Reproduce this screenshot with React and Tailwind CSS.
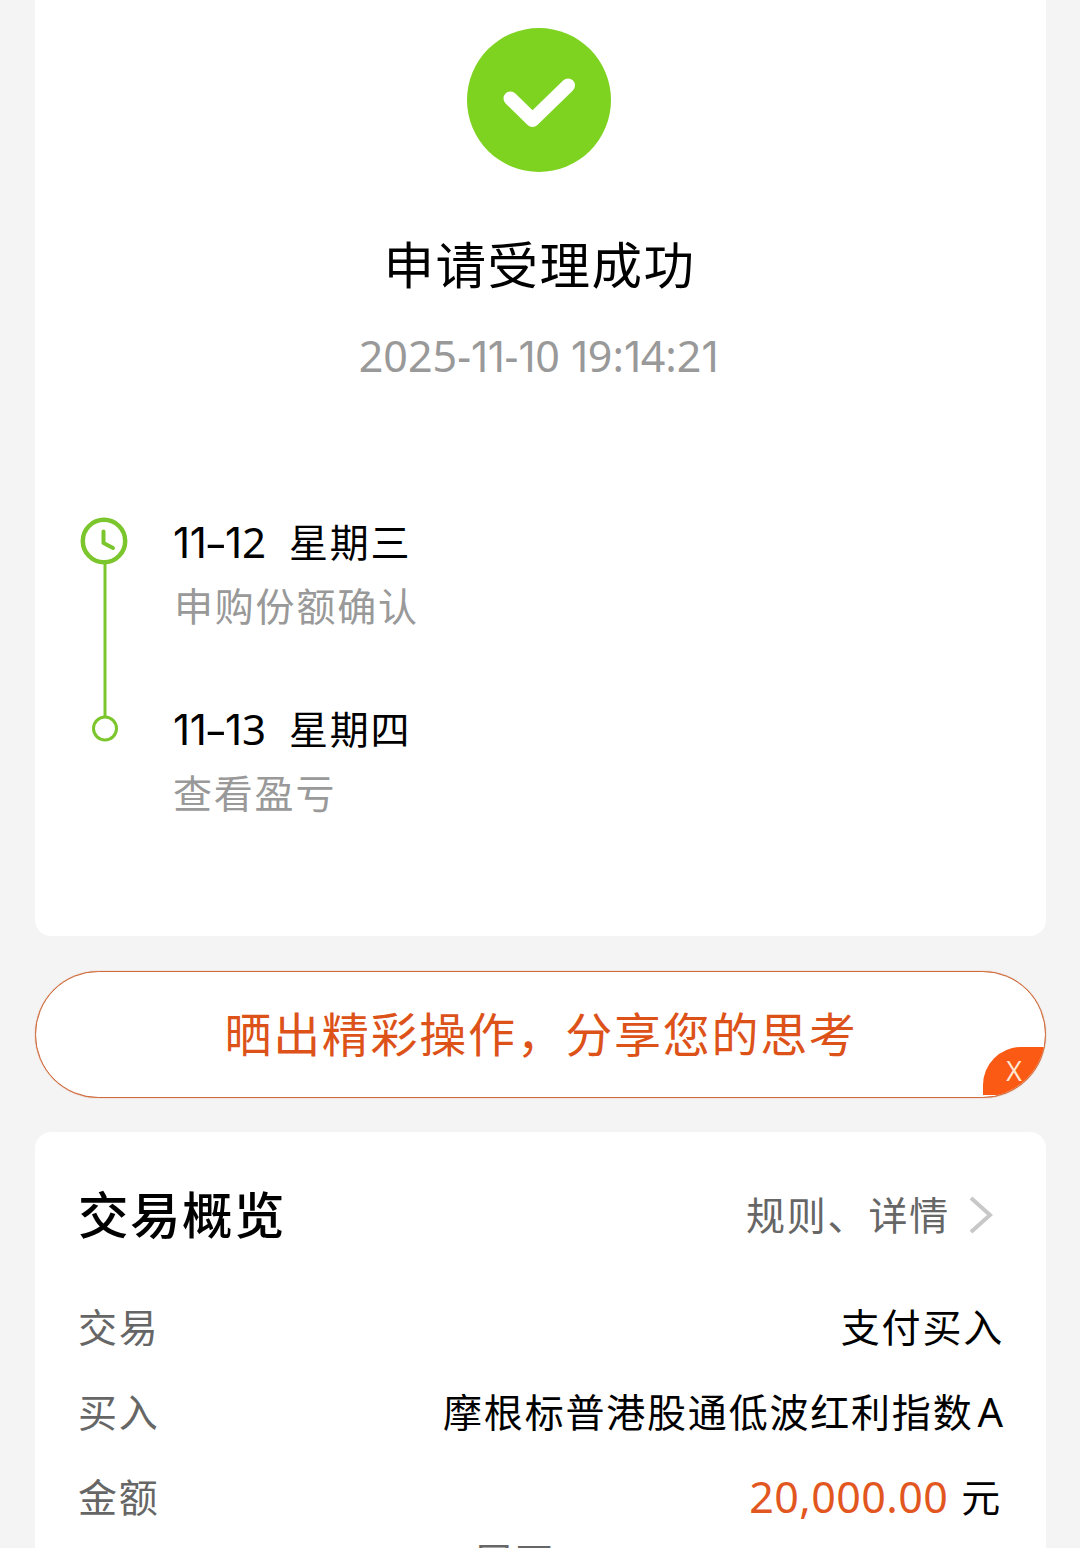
import React from "react";

const latin = "font-['Noto_Sans','Noto_Sans_CJK_SC',sans-serif]";

/* Figures with a narrow "1"; wideDash stretches the hyphen. */
function Figures({ text, wideDash }) {
  return text.split(/(1+|-)/).filter(Boolean).map((c, i) => {
    if (c[0] === "1") return <span key={i} className="font-['Inter',sans-serif] text-[42px] tracking-[-0.3px]">{c}</span>;
    if (c === "-" && wideDash) return <span key={i} className="mr-[3px] ml-[2px] inline-block scale-x-[1.6]">-</span>;
    return <span key={i}>{c}</span>;
  });
}

function Step({ date, day, note, className, noteClass }) {
  return (
    <div className={className}>
      <div className="flex h-[56px] items-center whitespace-nowrap text-black">
        <span className={`${latin} w-[116px] text-[42px]`}>
          <Figures text={date} wideDash />
        </span>
        <span className="-mt-[4px] text-[39px] tracking-[1.8px]">{day}</span>
      </div>
      <div className={`mt-[6px] flex h-[56px] items-center text-[39px] tracking-[1.8px] text-[#999] ${noteClass}`}>{note}</div>
    </div>
  );
}

function Row({ label, children }) {
  return (
    <div className="flex h-[85px] items-center justify-between text-[39px] tracking-[1.8px] whitespace-nowrap">
      <span className="text-[#666]">{label}</span>
      <span className="flex items-center text-black">{children}</span>
    </div>
  );
}

export default function App() {
  return (
    <div className="flex h-[1548px] w-[1080px] flex-col overflow-hidden bg-[#f4f4f4] pr-[34px] pl-[35px] font-['Noto_Sans_CJK_SC',sans-serif]">
      <section className="flex h-[936px] shrink-0 flex-col rounded-b-[16px] bg-white pt-[28px]">
        <svg className="ml-[432px] size-[144px]" viewBox="0 0 144 144" fill="none">
          <circle cx="72" cy="72" r="72" fill="#7ed321" />
          <path d="M43.5 70.5 L65.5 92 L101 57.500" stroke="#fff" strokeWidth="14" strokeLinecap="round" strokeLinejoin="round" />
        </svg>
        <h1 className="mt-[55px] flex h-[72px] items-center justify-center pr-[2px] text-[50.500px] font-normal tracking-[1.5px] text-black">申请受理成功</h1>
        <div className={`${latin} mt-[27px] flex h-[60px] items-center justify-center pr-[4px] text-[43px] whitespace-pre text-[#999]`}>
          <span><Figures text="2025-11-10 19:14:21" /></span>
        </div>
        <div className="mt-[128px] flex pl-[45px]">
          <svg className="mt-[3px] h-[228px] w-[50px]" viewBox="0 0 50 228" fill="none" stroke="#7bc62d">
            <circle cx="24" cy="24" r="21.200" strokeWidth="4.500" />
            <path d="M23.500 14.500 V26 L33 31" strokeWidth="4" strokeLinecap="round" strokeLinejoin="round" />
            <path d="M25 46 V199" strokeWidth="3" />
            <circle cx="25" cy="211.500" r="11.500" strokeWidth="3" />
          </svg>
          <div className="ml-[43px]">
            <Step date="11-12" day="星期三" note="申购份额确认" noteClass="pl-[1px]" />
            <Step className="mt-[69px]" date="11-13" day="星期四" note="查看盈亏" />
          </div>
        </div>
      </section>

      <button className="relative mt-[35px] flex h-[127px] shrink-0 items-center justify-center overflow-hidden rounded-full border border-[#cf6a3c] bg-white pb-[5px] pl-[1px] text-[47px] tracking-[1.7px] text-[#dc5219] shadow-[0_0_1px_#cf6a3c]">
        <span>晒出精彩操作，分享您的思考</span>
        <span className="absolute right-0 bottom-[2px] flex h-[48px] w-[62px] items-center justify-center rounded-tl-[38px] bg-[#fa5a14] font-['Open_Sans',sans-serif] text-[27px] tracking-normal text-[#ffe9d6]">X</span>
      </button>

      <section className="mt-[34px] h-[500px] shrink-0 rounded-t-[16px] bg-white pr-[42px] pl-[43px]">
        <header className="flex h-[151px] items-center justify-between pt-[14px]">
          <h2 className="-mt-[3px] text-[50.500px] font-medium tracking-[1.5px] text-black">交易概览</h2>
          <div className="flex items-center text-[39px] tracking-[1.8px] text-[#666]">
            <span className="-mt-[2px]">规则、详情</span>
            <svg className="mr-[11px] ml-[19px] h-[38px] w-[24px]" viewBox="0 0 24 38" fill="none">
              <path d="M2 2 L21 19 L2 36" stroke="#c8c8c8" strokeWidth="4" />
            </svg>
          </div>
        </header>
        <Row label="交易">支付买入</Row>
        <Row label="买入">
          摩根标普港股通低波红利指数<span className={`${latin} mr-[1px] ml-[4px] pt-[3px] text-[40px] tracking-normal`}>A</span>
        </Row>
        <Row label="金额">
          <span className={`${latin} mr-[13px] pt-[4px] text-[43px] tracking-[0.4px] text-[#e2571f]`}>20,000.00</span><span className="mr-[2px]">元</span>
        </Row>
        <div className="flex h-[43px] items-center justify-center pr-[53px] text-[39px] tracking-[1.8px] text-[#666]">展开</div>
      </section>
    </div>
  );
}
